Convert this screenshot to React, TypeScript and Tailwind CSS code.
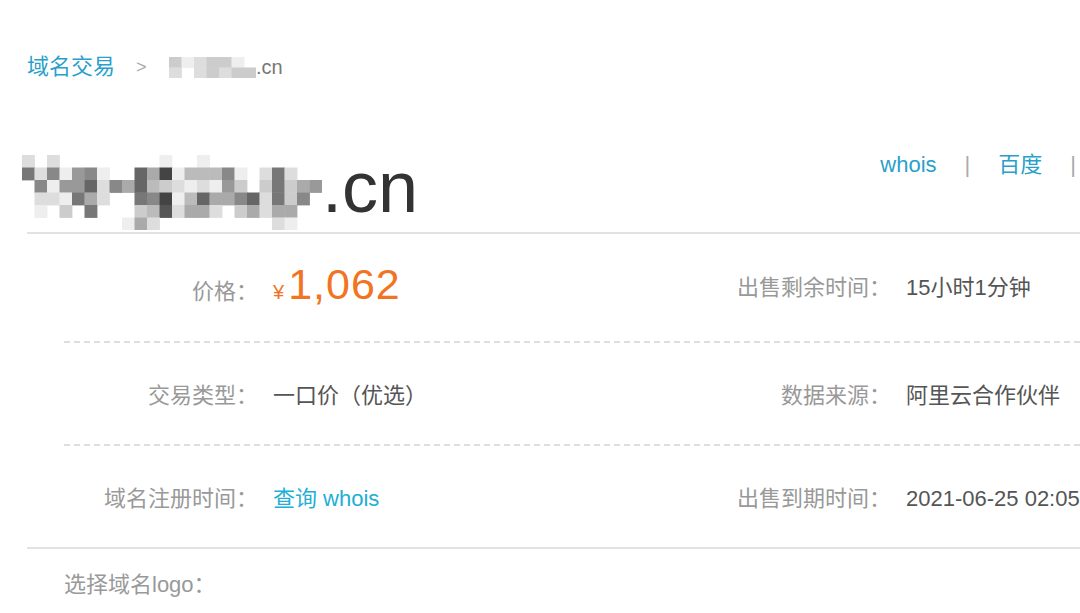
import React from "react";

const G: Record<string, string> = {
  "4": "#444", "5": "#555", "6": "#666", "7": "#777", "8": "#888", "9": "#999",
  a: "#aaa", b: "#bbb", c: "#ccc", d: "#ddd", e: "#eee",
};

function Mosaic({ rows, bw, bh, className }: { rows: string[]; bw: number; bh: number; className?: string }) {
  const w = rows[0].length * bw;
  const h = rows.length * bh;
  return (
    <svg width={w} height={h} viewBox={`0 0 ${w} ${h}`} className={className}>
      {rows.flatMap((r, y) =>
        r.split("").map((c, x) =>
          c === "." ? null : (
            <rect key={`${x}-${y}`} x={x * bw} y={y * bh} width={bw + 0.4} height={bh + 0.4} fill={G[c]} />
          )
        )
      )}
    </svg>
  );
}

const titleMosaic = [
  "d.d........e..e.........",
  "7d8e98e..6a4ebbb8e.d7d..",
  ".8e996d8a6bcdede9c.c7ca9",
  ".dde7ad..784eb6aa86d7c8.",
  ".e.c.7...cb5daad.cadaa..",
  "........ead.........de..",
];

const crumbMosaic = ["cedcce.", "d.dcdcc"];

function Dashed() {
  return <div className="ml-[64px] h-[2px] bg-[linear-gradient(to_right,#dedede_6px,transparent_6px)] bg-[length:10px_2px] bg-repeat-x" />;
}

function Row({
  h,
  pt,
  label,
  value,
  rlabel,
  rvalue,
}: {
  h: string;
  pt: string;
  label: string;
  value: React.ReactNode;
  rlabel: string;
  rvalue: React.ReactNode;
}) {
  return (
    <div className={`ml-[64px] flex items-center ${h} ${pt}`}>
      <div className="w-[440px] shrink-0 flex items-baseline">
        <div className="w-[194px] shrink-0 text-right text-[#999] leading-[30px]">{label}</div>
        <div className="ml-[15px] whitespace-nowrap leading-[30px]">{value}</div>
      </div>
      <div className="w-[387px] shrink-0 text-right text-[#999] leading-[30px]">{rlabel}</div>
      <div className="ml-[15px] shrink-0 whitespace-nowrap text-[#555] leading-[30px]">{rvalue}</div>
    </div>
  );
}

export default function App() {
  return (
    <div className="w-[1080px] h-[613px] overflow-hidden bg-white text-[22px] font-[family-name:'Liberation_Sans','Noto_Sans_CJK_SC',sans-serif]">
      {/* breadcrumb */}
      <div className="flex items-center h-[30px] mt-[52px] pl-[27px] leading-[30px]">
        <span className="text-[#2a9fcc]">域名交易</span>
        <span className="ml-[21px] text-[#aaa] text-[18px]">&gt;</span>
        <Mosaic rows={crumbMosaic} bw={12.5} bh={10.5} className="ml-[22px]" />
        <span className="text-[#777] text-[20px]">.cn</span>
      </div>

      {/* title */}
      <div className="mt-[73px] h-[77px] flex items-start pl-[22px]">
        <Mosaic rows={titleMosaic} bw={12.5} bh={12.5} />
        <span className="text-[72px] leading-[72px] -mt-[4px] text-[#333]">.cn</span>
        <div className="ml-auto pr-[4px] flex items-center h-[20px] leading-[20px] text-[#2a9fcc]">
          <span>whois</span>
          <span className="ml-[28px] text-[#aaa]">|</span>
          <span className="ml-[28px]">百度</span>
          <span className="ml-[28px] text-[#aaa]">|</span>
        </div>
      </div>
      <div className="ml-[27px] h-[2px] bg-[#e2e2e2]" />

      <Row
        h="h-[107px]"
        pt="pt-[0px]"
        label="价格："
        value={
          <span className="text-[#f07422] whitespace-nowrap">
            <span className="text-[20px]">¥</span>
            <span className="ml-[4px] text-[43px] tracking-[1px]">1,062</span>
          </span>
        }
        rlabel="出售剩余时间："
        rvalue="15小时1分钟"
      />
      <Dashed />
      <Row
        h="h-[101px]"
        pt="pt-[4px]"
        label="交易类型："
        value={<span className="text-[#555]">一口价（优选）</span>}
        rlabel="数据来源："
        rvalue="阿里云合作伙伴"
      />
      <Dashed />
      <Row
        h="h-[101px]"
        pt="pt-[5px]"
        label="域名注册时间："
        value={<span className="text-[#22aed6]">查询 whois</span>}
        rlabel="出售到期时间："
        rvalue="2021-06-25 02:05"
      />
      <div className="ml-[27px] h-[2px] bg-[#e2e2e2]" />

      <div className="mt-[21px] pl-[64px] leading-[30px] text-[#999]">选择域名logo：</div>
    </div>
  );
}
